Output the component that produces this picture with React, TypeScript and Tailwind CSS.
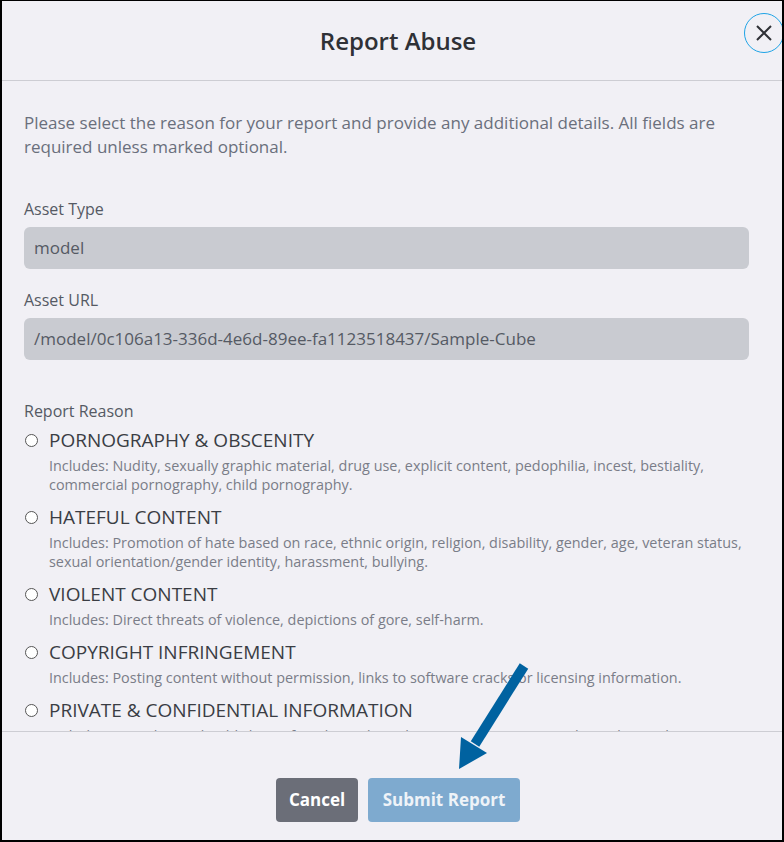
import {ReactNode} from 'react'

const reasons = [
	{
		title: 'PORNOGRAPHY & OBSCENITY',
		desc: 'Includes: Nudity, sexually graphic material, drug use, explicit content, pedophilia, incest, bestiality, commercial pornography, child pornography.',
	},
	{
		title: 'HATEFUL CONTENT',
		desc: 'Includes: Promotion of hate based on race, ethnic origin, religion, disability, gender, age, veteran status, sexual orientation/gender identity, harassment, bullying.',
	},
	{
		title: 'VIOLENT CONTENT',
		desc: 'Includes: Direct threats of violence, depictions of gore, self-harm.',
	},
	{
		title: 'COPYRIGHT INFRINGEMENT',
		desc: 'Includes: Posting content without permission, links to software cracks or licensing information.',
	},
	{
		title: 'PRIVATE & CONFIDENTIAL INFORMATION',
		desc: "Includes: Unauthorized publishing of credit card numbers, Social Security Numbers, driver's licenses.",
	},
]

function Field({label, children}: {label: string, children: ReactNode}) {
	return (
		<div className="flex flex-col">
			<label className="text-[16px] leading-[22px] text-[#555a64]">{label}</label>
			<div className="mt-[7px] h-[42px] rounded-[6px] bg-[#c9cbd1] px-[10px] flex items-center text-[17px] text-[#555a64]">
				{children}
			</div>
		</div>
	)
}

export default function App() {
	return (
		<div
			className="relative w-[784px] h-[842px] bg-[#f1f0f5] border-l-2 border-r-2 border-b-2 border-t border-black flex flex-col overflow-hidden"
			style={{fontFamily: '"Open Sans", "Noto Sans", sans-serif'}}
		>
			{/* Header */}
			<div className="relative h-[80px] shrink-0 flex items-center justify-center pl-[12px] border-b border-[#cdcdd3]">
				<h2 className="text-[24px] font-semibold text-[#2f3136]">Report Abuse</h2>
				<button className="absolute right-[-2px] top-[12px] w-[40px] h-[40px] rounded-full border-[1.5px] border-[#1ea3e6] flex items-center justify-center text-[#2f3136]">
					<svg width="18" height="18" viewBox="0 0 18 18" fill="none" stroke="currentColor" strokeWidth="2">
						<path d="M2 2 L16 16 M16 2 L2 16" />
					</svg>
				</button>
			</div>

			{/* Body */}
			<div className="flex-1 overflow-hidden border-b border-[#cdcdd3] pl-[22px] pr-[33px] pt-[30px]">
				<p className="text-[17px] leading-[24px] text-[#6a6f7c]">
					Please select the reason for your report and provide any additional details. All fields are required unless marked optional.
				</p>

				<div className="mt-[39px] flex flex-col gap-[20px]">
					<Field label="Asset Type">model</Field>
					<Field label="Asset URL">/model/0c106a13-336d-4e6d-89ee-fa1123518437/Sample-Cube</Field>
				</div>

				<div className="mt-[40px]">
					<div className="text-[16px] leading-[22px] text-[#555a64]">Report Reason</div>
					<div className="mt-[5px] flex flex-col gap-[10px]">
						{reasons.map(r => (
							<div key={r.title} className="flex items-start">
								<span className="mt-[7px] ml-[1px] w-[13px] h-[13px] rounded-full border border-[#555] bg-white shrink-0" />
								<div className="ml-[11px]">
									<div className="text-[19px] leading-[26px] text-[#3a3d44]">{r.title}</div>
									<div className="mt-[3px] text-[14.4px] leading-[19px] text-[#7a7d88]">{r.desc}</div>
								</div>
							</div>
						))}
					</div>
				</div>
			</div>

			{/* Footer */}
			<div className="h-[108px] shrink-0 flex items-start justify-center pl-[12px] gap-[10px] pt-[46px]">
				<button className="h-[44px] w-[82px] rounded-[4px] bg-[#6b6e78] text-white text-[17px] font-bold">Cancel</button>
				<button className="h-[44px] w-[152px] rounded-[4px] bg-[#7eaacf] text-[#eef3f8] text-[17px] font-bold">Submit Report</button>
			</div>

			{/* Annotation arrow */}
			<svg className="absolute left-[440px] top-[655px] pointer-events-none" width="100" height="125" viewBox="0 0 100 125">
				<path d="M82 10 L33 88" stroke="#0062a0" strokeWidth="10" strokeLinecap="butt" />
				<path d="M17 113 L19 81 L45 97 Z" fill="#0062a0" />
			</svg>
		</div>
	)
}
